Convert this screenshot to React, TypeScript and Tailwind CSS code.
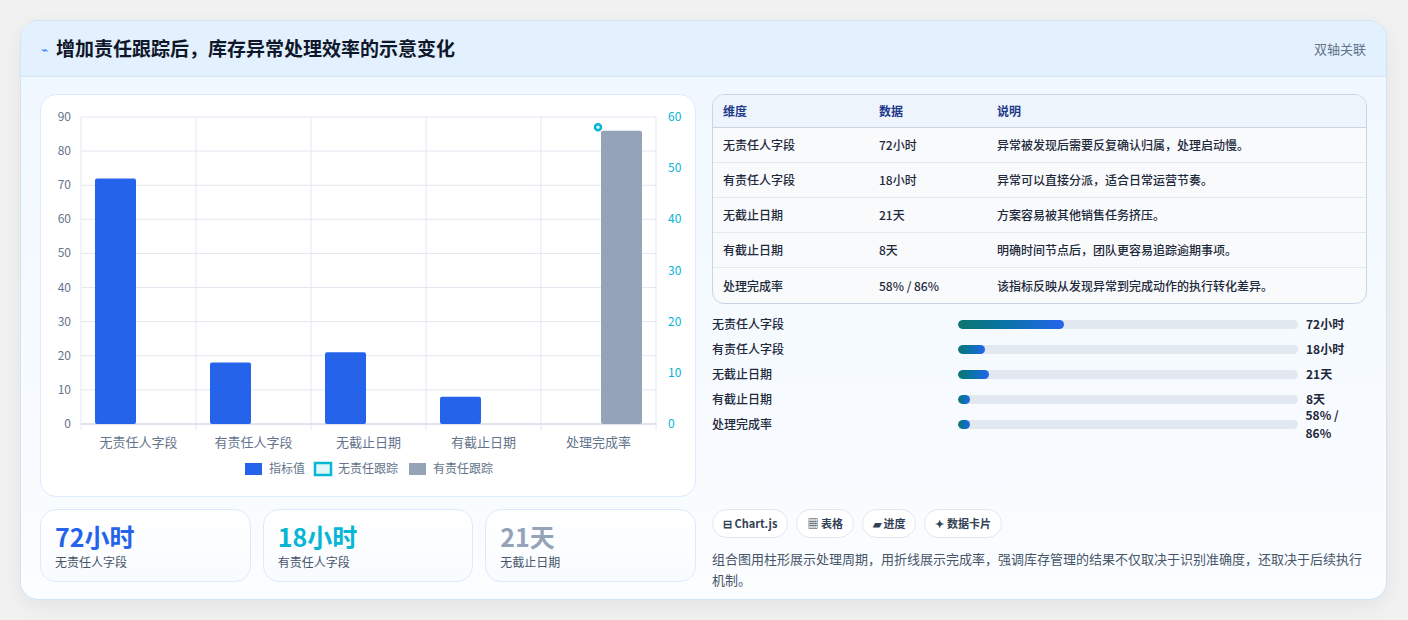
import React from "react";

const F = { fontFamily: '"Noto Sans CJK SC","Noto Sans",sans-serif' };
const cats = ["无责任人字段", "有责任人字段", "无截止日期", "有截止日期", "处理完成率"];
const vals = [72, 18, 21, 8, null];
const rows = [
  ["无责任人字段", "72小时", "异常被发现后需要反复确认归属，处理启动慢。"],
  ["有责任人字段", "18小时", "异常可以直接分派，适合日常运营节奏。"],
  ["无截止日期", "21天", "方案容易被其他销售任务挤压。"],
  ["有截止日期", "8天", "明确时间节点后，团队更容易追踪逾期事项。"],
  ["处理完成率", "58% / 86%", "该指标反映从发现异常到完成动作的执行转化差异。"],
];
const prog = [
  ["无责任人字段", 106, "72小时"],
  ["有责任人字段", 27, "18小时"],
  ["无截止日期", 31, "21天"],
  ["有截止日期", 12, "8天"],
  ["处理完成率", 12, "58% / 86%"],
];

function Chart() {
  const L = 40, R = 615, T = 22, B = 329;
  const y = (v: number) => B - (v / 90) * (B - T);
  const cw = (R - L) / 5;
  return (
    <svg width="656" height="403" style={F}>
      {[0, 10, 20, 30, 40, 50, 60, 70, 80, 90].map((v) => (
        <g key={v}>
          <line x1={L} x2={R} y1={y(v)} y2={y(v)} stroke="#e2e8f0" />
          <text x={L - 10} y={y(v) + 4} fontSize="12" fill="#64748b" textAnchor="end">{v}</text>
        </g>
      ))}
      {[0, 10, 20, 30, 40, 50, 60].map((v) => (
        <text key={v} x={R + 12} y={B - (v / 60) * (B - T) + 4} fontSize="12" fill="#06b6d4">{v}</text>
      ))}
      {[0, 1, 2, 3, 4, 5].map((i) => (
        <line key={i} x1={L + i * cw} x2={L + i * cw} y1={T} y2={B + 6} stroke="#e2e8f0" />
      ))}
      <line x1={L} x2={R} y1={B} y2={B} stroke="#cbd5e1" />
      {vals.map((v, i) =>
        v == null ? null : (
          <rect key={i} x={L + i * cw + 14} y={y(v)} width={41} height={B - y(v)} rx="2" fill="#2563eb" />
        )
      )}
      <rect x={L + 4 * cw + 60} y={y(86)} width={41} height={B - y(86)} rx="2" fill="#94a3b8" />
      <circle cx={557} cy={B - (58 / 60) * (B - T)} r="3" fill="#e0f7fa" stroke="#06b6d4" strokeWidth="2.5" />
      {cats.map((c, i) => (
        <text key={c} x={L + i * cw + cw / 2} y={B + 23} fontSize="13" fill="#64748b" textAnchor="middle">{c}</text>
      ))}
      <rect x={204} y={368} width={17} height={12} fill="#2563eb" />
      <text x={228} y={378} fontSize="12" fill="#64748b">指标值</text>
      <rect x={274} y={368} width={16} height={12} fill="#e0f7fa" stroke="#06b6d4" strokeWidth="2.5" />
      <text x={297} y={378} fontSize="12" fill="#64748b">无责任跟踪</text>
      <rect x={368} y={368} width={17} height={12} fill="#94a3b8" />
      <text x={392} y={378} fontSize="12" fill="#64748b">有责任跟踪</text>
    </svg>
  );
}

function Stat({ v, l, c }: { v: string; l: string; c: string }) {
  return (
    <div className="flex-1 h-[73px] rounded-2xl border border-[#dbeafe] bg-gradient-to-b from-white to-[#f8fbff] px-[14px] pt-[8px]">
      <div className={`text-[25px] font-bold leading-[36px] ${c}`}>{v}</div>
      <div className="text-[12px] text-[#475569] leading-[16px]">{l}</div>
    </div>
  );
}

export default function App() {
  return (
    <div className="w-[1408px] h-[620px] bg-[#f1f1f2] pt-[20px] pl-[20px]" style={F}>
      <div className="w-[1367px] h-[580px] rounded-[18px] border border-[#cfe5f3] bg-gradient-to-b from-[#eff7ff] to-[#fbfdff] overflow-hidden shadow-[0_6px_20px_rgba(0,0,0,0.06)]">
        <div className="h-[56px] bg-[#e3f0fd] border-b border-[#d6e6f5] flex items-center justify-between px-[20px]">
          <div className="flex items-center gap-[8px]">
            <span className="text-[#3b82f6] text-[12px]">⌁</span>
            <span className="text-[19px] font-bold text-[#0f172a]">增加责任跟踪后，库存异常处理效率的示意变化</span>
          </div>
          <span className="text-[13px] text-[#64748b]">双轴关联</span>
        </div>
        <div className="flex gap-[16px] px-[19px] pt-[17px]">
          <div className="w-[656px] flex flex-col gap-[12px]">
            <div className="h-[403px] rounded-2xl border border-[#dbeafe] bg-white"><Chart /></div>
            <div className="flex gap-[12px]">
              <Stat v="72小时" l="无责任人字段" c="text-[#2563eb]" />
              <Stat v="18小时" l="有责任人字段" c="text-[#06b6d4]" />
              <Stat v="21天" l="无截止日期" c="text-[#94a3b8]" />
            </div>
          </div>
          <div className="w-[657px] flex flex-col">
            <div className="rounded-xl border border-[#cbd5e1] bg-[#f8fafc] overflow-hidden text-[12px]">
              <div className="flex h-[33px] items-center bg-[#eef4fb] border-b border-[#cbd5e1] font-bold text-[#1e3a8a]">
                <div className="w-[166px] pl-[10px]">维度</div>
                <div className="w-[118px]">数据</div>
                <div>说明</div>
              </div>
              {rows.map((r, i) => (
                <div key={i} className={`flex h-[35px] items-center font-medium text-[#1e293b] ${i < 4 ? "border-b border-[#e2e8f0]" : ""}`}>
                  <div className="w-[166px] pl-[10px]">{r[0]}</div>
                  <div className="w-[118px]">{r[1]}</div>
                  <div>{r[2]}</div>
                </div>
              ))}
            </div>
            <div className="flex flex-col gap-[11px] mt-[13px]">
              {prog.map((p, i) => (
                <div key={i} className="flex items-center h-[14px] text-[12px]">
                  <div className="w-[246px] font-medium text-[#1e293b]">{p[0]}</div>
                  <div className="w-[340px] h-[9px] rounded-full bg-[#e2e8f0] overflow-hidden">
                    <div className="h-full rounded-full bg-gradient-to-r from-[#0f766e] to-[#2563eb]" style={{ width: p[1] as number }} />
                  </div>
                  <div className="ml-[8px] font-bold text-[#1e293b]">{p[2]}</div>
                </div>
              ))}
            </div>
            <div className="flex gap-[8px] mt-[78px]">
              {["⊟ Chart.js", "▦ 表格", "▰ 进度", "✦ 数据卡片"].map((t) => (
                <div key={t} className="h-[29px] px-[10px] rounded-full border border-[#e2e8f0] bg-white flex items-center text-[11px] font-bold text-[#334155]">{t}</div>
              ))}
            </div>
            <p className="mt-[10px] text-[13px] leading-[21px] text-[#475569]">
              组合图用柱形展示处理周期，用折线展示完成率，强调库存管理的结果不仅取决于识别准确度，还取决于后续执行机制。
            </p>
          </div>
        </div>
      </div>
    </div>
  );
}
